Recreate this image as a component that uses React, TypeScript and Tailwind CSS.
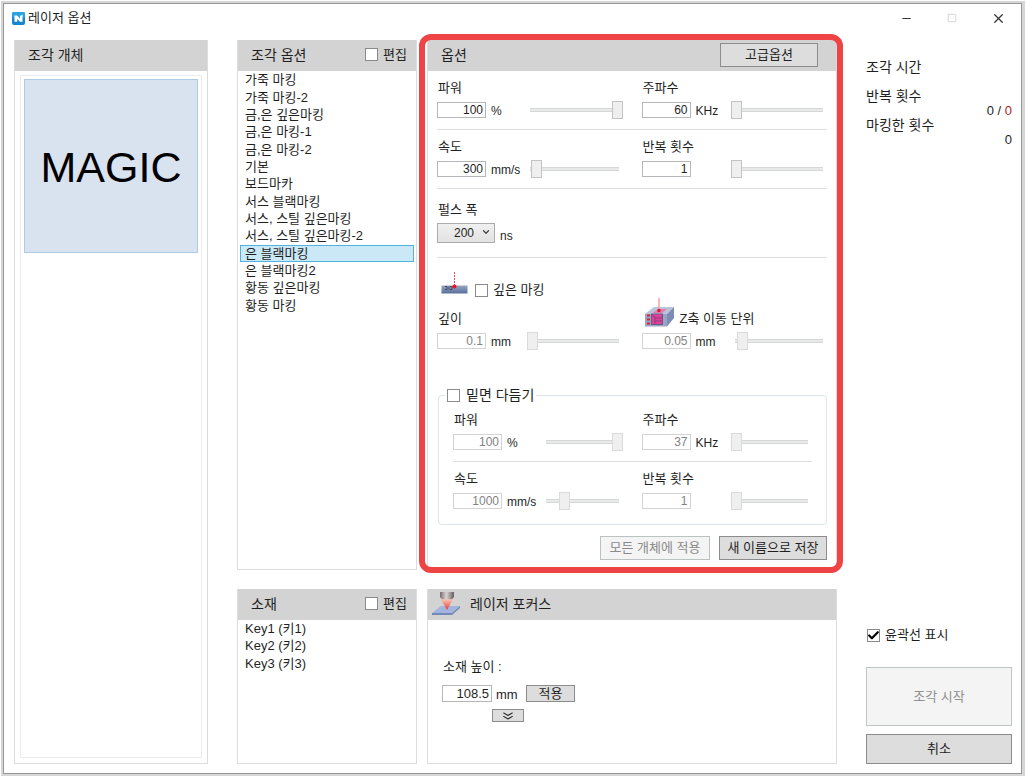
import React, { useState } from 'react';
import { Check, ChevronDown, ChevronsDown, Minus, Square, X } from 'lucide-react';

const PRESETS = [
    '가죽 마킹',
    '가죽 마킹-2',
    '금,은 깊은마킹',
    '금,은 마킹-1',
    '금,은 마킹-2',
    '기본',
    '보드마카',
    '서스 블랙마킹',
    '서스, 스틸 깊은마킹',
    '서스, 스틸 깊은마킹-2',
    '은 블랙마킹',
    '은 블랙마킹2',
    '황동 깊은마킹',
    '황동 마킹',
];

const MATERIALS = ['Key1 (키1)', 'Key2 (키2)', 'Key3 (키3)'];

const AppIcon = () => (
    <svg viewBox="0 0 13 13" className="w-[13px] h-[13px]" aria-hidden="true">
        <rect width="13" height="13" rx="2" fill="#1687cf" />
        <rect width="13" height="6" rx="2" fill="#2ba3e0" />
        <path d="M2.500 3.500 L5 3.500 L8 6.500 V4 L10.500 2.500 V9.800 H8 L5.200 7 V9.800 H2.500 Z" fill="#fff" />
    </svg>
);

const EngraveIcon = () => (
    <svg viewBox="0 0 27 23" className="w-[27px] h-[23px] mb-[3px]" aria-hidden="true">
        <defs>
            <linearGradient id="plate" x1="0" y1="0" x2="0" y2="1">
                <stop offset="0" stopColor="#98a5c2" />
                <stop offset="1" stopColor="#586f9b" />
            </linearGradient>
        </defs>
        <rect x="0.500" y="13.500" width="26" height="8" fill="url(#plate)" />
        <path d="M4 14.500h2v3h-2M8 14.500v3M9 14.500h2v3h-2" stroke="#3f4a63" strokeWidth="1" fill="none" />
        <path d="M13.500 0V14" stroke="#f04a55" strokeWidth="1" strokeDasharray="2 1" />
        <circle cx="13.500" cy="14.500" r="2" fill="#f1121d" />
    </svg>
);

const ZAxisIcon = () => (
    <svg viewBox="0 0 30 29" className="w-[30px] h-[29px] ml-[2px]" aria-hidden="true">
        <path d="M0 16 L9 9 H29 L22 16 Z" fill="#b9c4dc" />
        <path d="M22 16 L29 9 V20 L22 28.500 Z" fill="#7d8db1" />
        <rect x="0" y="16" width="22" height="12.500" fill="#98a5c4" />
        <path d="M8 15 L13 11 H22 L17 15 Z" fill="#dd7fae" />
        <rect x="6.500" y="16" width="11" height="10.500" fill="#e0409a" stroke="#6c5a86" />
        <path d="M7 17L10 19V26M10 20H17M10 23H17" stroke="#8d3f7c" fill="none" />
        <path d="M2 17.500h3M2 21.500h3M2 25.500h3" stroke="#dc2337" strokeWidth="2" />
        <path d="M14 0V12" stroke="#f4a0a6" strokeWidth="1.500" />
        <circle cx="14" cy="12.500" r="1.700" fill="#e3122f" />
    </svg>
);

const FocusIcon = () => (
    <svg viewBox="0 0 28 25" className="w-7 h-[25px]" aria-hidden="true">
        <defs>
            <linearGradient id="lens" x1="0" y1="0" x2="1" y2="0">
                <stop offset="0" stopColor="#766c6c" />
                <stop offset="0.450" stopColor="#dcd4d2" />
                <stop offset="1" stopColor="#665c5c" />
            </linearGradient>
            <linearGradient id="beam" x1="0" y1="0" x2="0" y2="1">
                <stop offset="0" stopColor="#f9c5b5" />
                <stop offset="1" stopColor="#e5382f" />
            </linearGradient>
        </defs>
        <path d="M0 22 L9 15 H28 L20 22 Z" fill="#a3b5dc" />
        <path d="M0 22 H20 L28 15 V17 L20 24 H0 Z" fill="#7389b8" />
        <path d="M8 1 H22 V6 L20 8.500 H10 L8 6 Z" fill="url(#lens)" />
        <path d="M9 8.500 H21 L15 19 Z" fill="url(#beam)" />
    </svg>
);

interface CheckBoxProps {
    label: string;
    defaultChecked?: boolean;
    className?: string;
}

const CheckBox: React.FC<CheckBoxProps> = ({ label, defaultChecked, className = 'gap-[5px] text-[13px]' }) => (
    <label className={`flex items-center leading-4 ${className}`}>
        <span className="relative flex">
            <input
                type="checkbox"
                defaultChecked={defaultChecked}
                className="peer appearance-none w-[13px] h-[13px] bg-white border border-[#8a8a8a]"
            />
            <Check className="hidden peer-checked:block absolute inset-0 w-[13px] h-[13px] text-black pointer-events-none" strokeWidth={4} />
        </span>
        {label}
    </label>
);

interface ParamProps {
    id: string;
    label: string;
    value: string;
    unit?: string;
    percent: number;
    unitWidth: string;
    icon?: React.ReactNode;
    disabled?: boolean;
}

const Param: React.FC<ParamProps> = ({ id, label, value, unit, percent, unitWidth, icon, disabled }) => (
    <div className="min-w-0">
        <div className="flex items-end gap-[5px] h-4 pl-px">
            {icon}
            <label htmlFor={id} className="text-[13px] leading-4 whitespace-nowrap">{label}</label>
        </div>
        <div className="mt-[6px] flex items-center h-4">
            <input
                id={id}
                type="text"
                defaultValue={value}
                disabled={disabled}
                className="w-[49px] h-4 shrink-0 border border-[#b4b6ba] bg-white pr-[2px] text-right text-xs leading-[14px] disabled:border-[#d4d4d4] disabled:text-[#838383]"
            />
            <span className={`ml-[5px] pt-[2px] shrink-0 text-xs leading-[14px] ${unitWidth}`}>{unit}</span>
            <input
                type="range"
                aria-label={label}
                defaultValue={percent}
                disabled={disabled}
                className="flex-1 min-w-0 h-[18px] appearance-none bg-no-repeat bg-left bg-[length:calc(100%-4px)_4px] bg-[linear-gradient(#d6d8d8_1px,#e8eaea_1px,#e8eaea_3px,#d6d8d8_3px)] [&::-webkit-slider-thumb]:appearance-none [&::-webkit-slider-thumb]:w-[11px] [&::-webkit-slider-thumb]:h-[18px] [&::-webkit-slider-thumb]:bg-[#efefef] [&::-webkit-slider-thumb]:border [&::-webkit-slider-thumb]:border-[#c3c3c3] disabled:[&::-webkit-slider-thumb]:border-[#dadada]"
            />
        </div>
    </div>
);

interface PanelProps {
    title: string;
    icon?: React.ReactNode;
    action?: React.ReactNode;
    children: React.ReactNode;
}

const Panel: React.FC<PanelProps> = ({ title, icon, action, children }) => (
    <section className="relative min-w-0 h-full flex flex-col border border-t-0 border-[#dcdcdc] bg-white">
        <header className="h-[31px] shrink-0 flex items-center bg-[#d3d3d3] pl-[13px] pr-[9px] pb-[2px]">
            {icon && <span className="-ml-[9px] mr-[10px]">{icon}</span>}
            <h2 className="flex-1 text-sm leading-4 whitespace-nowrap">{title}</h2>
            {action}
        </header>
        {children}
    </section>
);

interface PickListProps {
    label: string;
    items: string[];
    initial?: string;
    className: string;
}

const PickList: React.FC<PickListProps> = ({ label, items, initial, className }) => {
    const [selected, setSelected] = useState(initial);

    return (
        <ul aria-label={label} className={`grid auto-rows-fr px-[2px] ${className}`}>
            {items.map((item) => (
                <li key={item} className="flex min-h-0">
                    <button
                        onClick={() => setSelected(item)}
                        className={`w-full border pl-1 text-left text-[13px] leading-[15px] whitespace-nowrap ${
                            item === selected ? 'border-[#4fb3e0] bg-[#cbe8f6]' : 'border-transparent'
                        }`}
                    >
                        {item}
                    </button>
                </li>
            ))}
        </ul>
    );
};

const outerCols = 'grid grid-cols-[minmax(0,204fr)_minmax(0,185fr)]';
const innerCols = 'grid grid-cols-[minmax(0,188fr)_minmax(0,170fr)]';

const OptionPanel = () => (
    <Panel
        title="옵션"
        action={
            <button className="w-[98px] h-6 mr-[9px] border border-[#8c8c8c] bg-[#dddddd] text-[13px] leading-4">고급옵션</button>
        }
    >
        <div className="px-[9px] pb-[9px]">
            <div className={`${outerCols} pt-[9px] pb-[11px] border-b border-[#dedede]`}>
                <div className="pr-[19px]">
                    <Param id="power" label="파워" value="100" unit="%" percent={100} unitWidth="w-[39px]" />
                </div>
                <Param id="frequency" label="주파수" value="60" unit="KHz" percent={0} unitWidth="w-[35px]" />
            </div>
            <div className={`${outerCols} pt-[9px] pb-[11px] border-b border-[#dedede]`}>
                <div className="pr-[19px]">
                    <Param id="speed" label="속도" value="300" unit="mm/s" percent={1} unitWidth="w-[39px]" />
                </div>
                <Param id="repeat" label="반복 횟수" value="1" percent={0} unitWidth="w-[35px]" />
            </div>

            <div className="pt-[13px] pb-[14px] border-b border-[#dedede]">
                <label htmlFor="pulse" className="block pl-px text-[13px] leading-4">펄스 폭</label>
                <div className="mt-[5px] flex items-end gap-[5px]">
                    <div className="relative">
                        <select
                            id="pulse"
                            defaultValue="200"
                            className="block w-[58px] h-5 appearance-none border border-[#acacac] bg-linear-to-b from-[#f0f0f0] to-[#e2e2e2] pl-4 text-xs leading-4"
                        >
                            <option>100</option>
                            <option>200</option>
                        </select>
                        <ChevronDown className="absolute right-1 top-1 w-[10px] h-[10px] text-[#444] pointer-events-none" strokeWidth={3} />
                    </div>
                    <span className="text-xs leading-[14px]">ns</span>
                </div>
            </div>

            <div className="pt-[14px] pl-1 flex items-end gap-[7px]">
                <EngraveIcon />
                <CheckBox label="깊은 마킹" />
            </div>
            <div className={`${outerCols} pt-[13px]`}>
                <div className="pr-[19px]">
                    <Param id="depth" label="깊이" value="0.1" unit="mm" percent={0} unitWidth="w-9" disabled />
                </div>
                <Param id="zstep" label="Z축 이동 단위" value="0.05" unit="mm" percent={3} unitWidth="w-[39px]" icon={<ZAxisIcon />} disabled />
            </div>

            <fieldset className="mt-[38px] ml-px min-w-0 border border-[#dce5e8] rounded-sm px-[14px] pb-1">
                <legend className="-ml-2 px-[2px] h-4">
                    <CheckBox label="밑면 다듬기" className="gap-[6px] text-sm" />
                </legend>
                <div className={`${innerCols} pt-[9px] pb-[11px] border-b border-[#dedede]`}>
                    <div className="pr-[19px]">
                        <Param id="base-power" label="파워" value="100" unit="%" percent={100} unitWidth="w-[39px]" disabled />
                    </div>
                    <Param id="base-frequency" label="주파수" value="37" unit="KHz" percent={0} unitWidth="w-[35px]" disabled />
                </div>
                <div className={`${innerCols} pt-[9px] pb-[11px]`}>
                    <div className="pr-[19px]">
                        <Param id="base-speed" label="속도" value="1000" unit="mm/s" percent={20} unitWidth="w-[39px]" disabled />
                    </div>
                    <Param id="base-repeat" label="반복 횟수" value="1" percent={0} unitWidth="w-[35px]" disabled />
                </div>
            </fieldset>

            <div className="mt-[11px] flex justify-end gap-[9px]">
                <button disabled className="w-[110px] h-6 border border-[#bcc2c2] bg-[#f4f4f4] text-[13px] leading-4 text-[#8a8a8a]">
                    모든 개체에 적용
                </button>
                <button className="w-[108px] h-6 border border-[#8c8c8c] bg-[#dddddd] text-[13px] leading-4">새 이름으로 저장</button>
            </div>
        </div>
        <div className="absolute -top-[6px] -bottom-1 -left-[9px] -right-[7px] border-[6px] border-[#ef4446] rounded-xl pointer-events-none" />
    </Panel>
);

const FocusPanel = () => (
    <Panel title="레이저 포커스" icon={<FocusIcon />}>
        <div className="pt-[39px] pl-[14px]">
            <label htmlFor="height" className="block pl-px text-[13px] leading-4">소재 높이 :</label>
            <div className="mt-[10px] flex items-center">
                <input
                    id="height"
                    type="text"
                    defaultValue="108.5"
                    className="w-[50px] h-[17px] border border-[#b4b6ba] bg-white pr-[2px] text-right text-[13px] leading-[15px]"
                />
                <span className="w-[34px] pl-1 pt-[2px] text-[13px] leading-[15px]">mm</span>
                <button className="w-[49px] h-[17px] border border-[#8c8c8c] bg-[#dddddd] text-[13px] leading-[15px]">적용</button>
            </div>
            <button
                aria-label="펼치기"
                className="mt-[7px] ml-[50px] w-8 h-[13px] flex items-center justify-center border border-[#8c8c8c] bg-[#dddddd]"
            >
                <ChevronsDown className="w-5 h-3" preserveAspectRatio="none" />
            </button>
        </div>
    </Panel>
);

const SideColumn = () => (
    <aside className="flex-[146] min-w-0 flex flex-col">
        <dl className="mt-5 h-[87px] grid auto-rows-fr text-sm leading-[14px]">
            <dt>조각 시간</dt>
            <dd />
            <dt>반복 횟수</dt>
            <dd className="text-right text-[13px]">
                0 / <span className="text-[#b01c1c]">0</span>
            </dd>
            <dt>마킹한 횟수</dt>
            <dd className="text-right text-[13px]">0</dd>
        </dl>
        <div className="mt-auto pl-px">
            <CheckBox label="윤곽선 표시" defaultChecked />
        </div>
        <button disabled className="mt-6 h-[59px] border border-[#bcc6c6] bg-[#f4f4f4] text-[13px] text-[#8f8f8f]">조각 시작</button>
        <button className="mt-2 h-[30px] border border-[#8c8c8c] bg-[#dddddd] text-[13px]">취소</button>
    </aside>
);

export default function App() {
    return (
        <div className="min-h-screen flex bg-white pt-px px-px pb-[2px] font-['Liberation_Sans','Noto_Sans_CJK_KR',sans-serif] text-[#1f1f1f]">
            <div className="flex-1 min-w-0 flex border-2 border-r-[3px] border-[#d6d6d6]">
                <div className="flex-1 min-w-0 flex flex-col border border-[#979797]">
                    <header className="h-7 shrink-0 flex items-center pl-2 pr-[15px]">
                        <AppIcon />
                        <h1 className="flex-1 pl-[3px] text-[13px] leading-4">레이저 옵션</h1>
                        <div className="flex items-center gap-[34px] text-[#333]">
                            <button aria-label="최소화">
                                <Minus className="w-[13px] h-[13px]" strokeWidth={2} />
                            </button>
                            <button aria-label="최대화" disabled className="text-[#cfcfcf]">
                                <Square className="w-[10px] h-[10px]" strokeWidth={2} />
                            </button>
                            <button aria-label="닫기">
                                <X className="w-[15px] h-[15px]" strokeWidth={2} />
                            </button>
                        </div>
                    </header>

                    <main className="flex-1 flex gap-[29px] pt-2 pl-[10px] pr-[9px] pb-[9px]">
                        <div className="flex-[194] min-w-0">
                            <Panel title="조각 개체">
                                <div className="flex-1 m-[5px] mt-1 p-[3px] border border-[#ececec]">
                                    <button className="w-full aspect-square pt-[2px] flex items-center justify-center border border-[#aecbe5] bg-[#d9e2ef] text-[43px] leading-none text-black">
                                        MAGIC
                                    </button>
                                </div>
                            </Panel>
                        </div>
                        <div className="flex-[600] min-w-0 grid grid-cols-[minmax(0,180fr)_minmax(0,410fr)] grid-rows-[auto_1fr] gap-x-[10px] gap-y-[19px]">
                            <Panel title="조각 옵션" action={<CheckBox label="편집" />}>
                                <PickList label="조각 옵션" items={PRESETS} initial="은 블랙마킹" className="h-[243px]" />
                            </Panel>
                            <OptionPanel />
                            <Panel title="소재" action={<CheckBox label="편집" />}>
                                <PickList label="소재" items={MATERIALS} className="h-[52px]" />
                            </Panel>
                            <FocusPanel />
                        </div>
                        <SideColumn />
                    </main>
                </div>
            </div>
        </div>
    );
}
